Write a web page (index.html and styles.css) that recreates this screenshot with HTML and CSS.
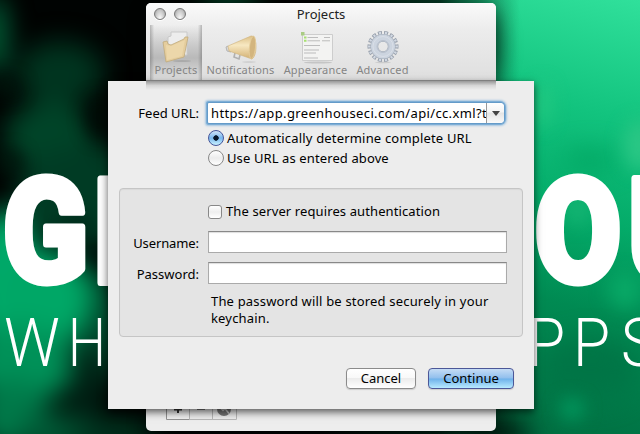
FILE: index.html
```html
<!DOCTYPE html>
<html lang="en">
<head>
<meta charset="utf-8">
<title>Projects</title>
<link rel="stylesheet" href="styles.css">
</head>
<body>
<div class="desktop">
  <svg class="wallpaper" viewBox="0 0 640 434" width="640" height="434">
    <defs>
      <linearGradient id="right" gradientUnits="userSpaceOnUse" x1="640" y1="0" x2="530" y2="434">
        <stop offset="0" stop-color="#30e09b"/><stop offset=".27" stop-color="#12c37e"/><stop offset=".5" stop-color="#04ab69"/><stop offset=".7" stop-color="#008a52"/><stop offset="1" stop-color="#006f42"/>
      </linearGradient>
      <linearGradient id="fade"><stop offset="0" stop-color="#000302"/><stop offset=".6" stop-color="#00170d" stop-opacity=".85"/><stop offset="1" stop-color="#003a22" stop-opacity="0"/></linearGradient>
      <filter id="soft" x="-200%" y="-200%" width="500%" height="500%" color-interpolation-filters="sRGB"><feGaussianBlur stdDeviation="13"/></filter>
      <filter id="fine" x="-200%" y="-200%" width="500%" height="500%" color-interpolation-filters="sRGB"><feGaussianBlur stdDeviation="9"/></filter>
    </defs>
    <rect width="640" height="434" fill="#000302"/>
    <rect x="320" width="320" height="434" fill="url(#right)"/>
    <rect x="320" width="200" height="434" fill="url(#fade)"/>
    <g filter="url(#soft)">
      <ellipse cx="60" cy="73" rx="44" ry="32" fill="#00341f"/>
      <ellipse cx="50" cy="137" rx="46" ry="36" fill="#004428"/>
      <ellipse cx="-5" cy="35" rx="12" ry="40" fill="#006b3f"/>
      <ellipse cx="90" cy="195" rx="75" ry="50" fill="#003b24"/>
      <ellipse cx="70" cy="330" rx="70" ry="65" fill="#00452a"/>
      <ellipse cx="5" cy="285" rx="36" ry="75" fill="#00a969"/>
      <ellipse cx="45" cy="298" rx="48" ry="48" fill="#00a766"/>
      <ellipse cx="20" cy="365" rx="50" ry="40" fill="#009158"/>
      <ellipse cx="12" cy="415" rx="36" ry="36" fill="#007949"/>
      <ellipse cx="60" cy="434" rx="44" ry="22" fill="#005a36"/>
      <ellipse cx="90" cy="382" rx="18" ry="34" fill="#001f13"/>
      <ellipse cx="110" cy="434" rx="50" ry="14" fill="#003a23"/>
      <ellipse cx="230" cy="-4" rx="30" ry="8" fill="#006b40"/>
      <ellipse cx="478" cy="45" rx="16" ry="36" fill="#002d1b"/>
      <ellipse cx="495" cy="434" rx="36" ry="18" fill="#001d11"/>
      <ellipse cx="590" cy="370" rx="48" ry="32" fill="#007546"/>
      <ellipse cx="590" cy="160" rx="28" ry="10" fill="#00a561"/>
    </g>
    <g filter="url(#fine)">
      <ellipse cx="6" cy="87" rx="14" ry="8" fill="#00160d"/>
      <ellipse cx="10" cy="162" rx="12" ry="10" fill="#00180e"/>
      <ellipse cx="100" cy="118" rx="13" ry="20" fill="#000b06"/>
      <ellipse cx="78" cy="222" rx="16" ry="7" fill="#002617"/>
      <ellipse cx="543" cy="105" rx="7" ry="22" fill="#25ca82"/>
      <ellipse cx="578" cy="210" rx="11" ry="14" fill="#18b574"/>
      <ellipse cx="625" cy="290" rx="17" ry="18" fill="#08a866"/>
      <ellipse cx="572" cy="409" rx="11" ry="10" fill="#00a063"/>
      <ellipse cx="640" cy="145" rx="16" ry="25" fill="#2bc785"/>
    </g>
    <text class="brand" transform="translate(3 282) scale(.86 1)">G</text>
    <text class="brand" transform="translate(94 282) scale(.8 1)">R</text>
    <text class="brand" transform="translate(535 282) scale(.86 1)">O</text>
    <text class="brand" transform="translate(628 282) scale(.86 1)">U</text>
    <text class="tagline" transform="translate(4 365.500) scale(.93 1)">W</text>
    <text class="tagline" transform="translate(68 365.500) scale(.8 1)">H</text>
    <text class="tagline" transform="translate(528 365.500) scale(.9 1)">P</text>
    <text class="tagline" transform="translate(573 365.500) scale(.9 1)">P</text>
    <text class="tagline" transform="translate(621 365.500) scale(.9 1)">S</text>
  </svg>

  <section class="window">
    <header class="chrome">
      <div class="titlebar">
        <div class="lights"><i class="light"></i><i class="light"></i></div>
        <h1 class="title">Projects</h1>
      </div>
      <nav class="toolbar">
        <a class="tool tool-projects">
          <svg class="icon" viewBox="0 0 36 36">
            <ellipse cx="24" cy="33" rx="9" ry="1" fill="#aaa"/>
            <path d="M10 9 13 8V4h16v23H10z" fill="#ededed" stroke="#c9c9c9"/>
            <path d="M5 14l4-1 1 3 3 1 13-6 1-2h3L26 29 8 34z" fill="#e5cd9d" stroke="#c0ab7c" stroke-width=".8"/>
            <path d="M8 17l5 1 14-6-3 16-15 4z" fill="#f0ddb2" opacity=".6"/>
          </svg>
          <span class="label">Projects</span>
        </a>
        <a class="tool tool-notifications">
          <svg class="icon" viewBox="0 0 36 36">
            <defs><linearGradient id="horn" x1="0" y1="0" x2="0" y2="1"><stop offset="0" stop-color="#dcbf85"/><stop offset=".4" stop-color="#f7e8c2"/><stop offset="1" stop-color="#d3b072"/></linearGradient></defs>
            <ellipse cx="26" cy="34" rx="7" ry=".8" fill="#ccc"/>
            <path d="M12 25l-1 4 5 2 1-4" fill="none" stroke="#b0b0b0" stroke-width="1.600"/>
            <path d="M5 18l-2 1 1 4 4 1" fill="#d8d8d8" stroke="#b5b5b5"/>
            <path d="M5 18 28 8c6-1 7 19 1 23L6 23z" fill="url(#horn)" stroke="#cfb17b" stroke-width=".6"/>
            <ellipse cx="29.500" cy="19.500" rx="3" ry="11.500" transform="rotate(6 29 19)" fill="#d3b57e" stroke="#e5cd9a" stroke-width=".8"/>
          </svg>
          <span class="label">Notifications</span>
        </a>
        <a class="tool tool-appearance">
          <svg class="icon" viewBox="0 0 36 36">
            <ellipse cx="20" cy="34.500" rx="14" ry="1" fill="#c5c5c5"/>
            <path d="M4.500 6.500h30v26h-30z" fill="#f3f3f2" stroke="#cdcdcd"/>
            <path d="M3 4h3.500v3.500H3z" fill="#a9cc83"/>
            <path d="M6 8.500h2.500v2H6zm0 3.300h2.500v2H6z" fill="#a7e070"/>
            <path d="M9.500 9.500H20m-10.500 3.300H22M26 9.500h6M24 12.800h8M6 17.500h16M6 22h15M6 25h12M6 30h14" stroke="#b5b5b5" stroke-width=".9"/>
          </svg>
          <span class="label">Appearance</span>
        </a>
        <a class="tool tool-advanced">
          <svg class="icon" viewBox="0 0 36 36">
            <ellipse cx="18" cy="34.500" rx="8" ry=".8" fill="#ccc"/>
            <g fill="none">
              <circle cx="18" cy="18.500" r="13" pathLength="28" stroke="#99a1ad" stroke-width="5" stroke-dasharray="1.300 .7" stroke-dashoffset=".65"/>
              <circle cx="18" cy="18.500" r="12.500" pathLength="28" stroke="#d2d9e3" stroke-width="4.800" stroke-dasharray=".7 1.300" stroke-dashoffset=".35"/>
              <circle cx="18" cy="18.500" r="8.700" stroke="#a4adb9" stroke-width="7.800"/>
              <circle cx="18" cy="18.500" r="8.700" stroke="#ccd4df" stroke-width="6.600"/>
              <circle cx="18" cy="18.500" r="6" stroke="#b2bac6" stroke-width=".8"/>
              <circle cx="18" cy="18.500" r="10" stroke="#dce1e9" stroke-width=".8"/>
            </g>
          </svg>
          <span class="label">Advanced</span>
        </a>
      </nav>
    </header>
    <footer class="listbar">
      <svg class="listbuttons" viewBox="0 0 71 22" width="71" height="22">
        <path d="M.5.500h23v21H.5z" fill="#f0f0f0" stroke="#929292"/>
        <path d="M23.500.500h47v21h-47zM46.500.500v21" fill="none" stroke="#b8b8b8"/>
        <path d="M8 11.500h8M12 7v8" stroke="#333" stroke-width="2"/>
        <path d="M31 11h8" stroke="#777" stroke-width="2"/>
        <circle cx="58" cy="11" r="7" fill="#777"/>
        <path d="M54 9.500l3 3 2-2 4 5" fill="none" stroke="#ccc" stroke-width="1.500"/>
      </svg>
    </footer>
  </section>

  <section class="sheet">
    <div class="row feed">
      <label class="field-label"><span>Feed URL:</span></label>
      <div class="combo"><span class="url">https://app.greenhouseci.com/api/cc.xml?t</span><span class="drop"><i class="arrow"></i></span></div>
    </div>
    <div class="choices">
      <label class="choice"><i class="radio on"></i><span class="t-wide">Automatically determine complete URL</span></label>
      <label class="choice"><i class="radio"></i><span class="t-mid">Use URL as entered above</span></label>
    </div>
    <div class="group">
      <label class="check"><i class="box"></i><span class="t-mid">The server requires authentication</span></label>
      <div class="row"><label class="field-label"><span class="t-tight">Username:</span></label><div class="input"></div></div>
      <div class="row"><label class="field-label"><span>Password:</span></label><div class="input"></div></div>
      <p class="note t-wide">The password will be stored securely in your<br>keychain.</p>
    </div>
    <div class="actions">
      <button class="button cancel">Cancel</button>
      <button class="button primary">Continue</button>
    </div>
  </section>
</div>
</body>
</html>
```
FILE: styles.css
```css
* { box-sizing: border-box; }
body { margin: 0; overflow: hidden; font: 13px/17px "Noto Sans", "Open Sans", sans-serif; color: #000; }
.desktop { position: relative; width: 640px; height: 434px; overflow: hidden; background: #000; }
.wallpaper { display: block; }
.brand { font: 900 145px Roboto, sans-serif; fill: #fff; stroke: #fff; stroke-width: 7px; stroke-linejoin: round; }
.tagline { font: 300 67px Roboto, sans-serif; fill: #fff; }

.window { position: absolute; left: 146px; top: 3px; width: 350px; height: 428px; border-radius: 5px; background: #ededed; box-shadow: 0 8px 18px rgba(0,0,0,.45); display: flex; flex-direction: column; justify-content: space-between; overflow: hidden; }
.chrome { height: 78px; background: linear-gradient(#fafafa, #ececec 35%, #dfdfdf); border-bottom: 1px solid #929292; }
.titlebar { height: 22px; display: grid; align-items: center; }
.lights, .title { grid-area: 1 / 1; }
.lights { display: flex; gap: 8px; padding-left: 8px; }
.light { width: 12px; height: 12px; border-radius: 50%; border: 1px solid #777; background: radial-gradient(ellipse at 50% 100%, #fff, #c8c8c8 60%, #999); box-shadow: 0 1px #fff; }
.title { margin: 0; text-align: center; font-size: 13px; font-weight: 400; color: #222; }
.toolbar { display: flex; height: 55px; padding-left: 4px; }
.tool { display: flex; flex-direction: column; align-items: center; padding-top: 3px; color: #858585; font-size: 11px; }
.tool-projects { width: 52px; background: linear-gradient(90deg, rgba(80,80,80,.35), transparent 8%, transparent 92%, rgba(80,80,80,.35)), linear-gradient(transparent, #c4c4c4 45%, #b9b9b9 60%, #e0e0e0); }
.tool-notifications { width: 77px; }
.tool-appearance { width: 73px; }
.tool-advanced { width: 61px; }
.icon { width: 36px; height: 36px; flex: none; }
.label { line-height: 14px; margin-top: -1px; white-space: nowrap; letter-spacing: .2px; }
.listbar { padding: 0 0 11px 20px; }
.listbuttons { display: block; }

.sheet { position: absolute; left: 108px; top: 81px; width: 426px; height: 328px; padding: 20px 11px; background: #ededed; box-shadow: 0 3px 8px rgba(0,0,0,.65); }
.sheet::before { content: ""; position: absolute; left: 38px; top: 0; width: 350px; height: 9px; background: linear-gradient(rgba(0,0,0,.36), rgba(0,0,0,.1) 50%, transparent); }
.row { display: flex; align-items: center; height: 31px; }
.field-label { width: 80px; margin-right: 9px; display: flex; justify-content: flex-end; white-space: nowrap; }
.feed { height: 24px; }
.combo { width: 296px; height: 20px; display: flex; border-radius: 1px 4px 4px 1px; background: #fff; box-shadow: 0 0 0 1px #649bc9, 0 0 0 2px #7eaed6, 0 0 2px 3px #a6c7e2; }
.url { width: 278px; padding-left: 3px; line-height: 20px; white-space: nowrap; overflow: hidden; letter-spacing: .36px; }
.drop { width: 18px; border-left: 1px solid #999; border-radius: 0 4px 4px 0; display: flex; align-items: center; justify-content: center; background: linear-gradient(#fff, #f4f4f4 45%, #e4e4e4 50%, #fafafa); }
.arrow { border: 4px solid transparent; border-top: 5px solid #444; border-bottom: 0; }
.choices { padding: 3px 0 0 89px; }
.choice { display: flex; align-items: center; height: 20px; gap: 3px; white-space: nowrap; }
.t-wide { letter-spacing: .18px; }
.t-mid { letter-spacing: .11px; }
.t-tight { letter-spacing: -.1px; }
.radio { width: 16px; height: 16px; border-radius: 50%; border: 1px solid #888; background: linear-gradient(#fff, #ececec 50%, #fff); flex: none; }
.radio.on { border-color: #45569a; background: radial-gradient(circle, #07172a 2.4px, transparent 3px), linear-gradient(#d0e4f9, #79b7ee 50%, #c9f2ff); }
.group { margin-top: 20px; height: 149px; border: 1px solid #c5c5c5; border-radius: 4px; background: #e4e4e4; padding-top: 15px; box-shadow: inset 0 1px 1px #d9d9d9; }
.group .field-label { width: 79px; padding-top: 3px; }
.check { display: flex; align-items: center; height: 15px; gap: 4px; padding-left: 88px; margin-bottom: 7px; white-space: nowrap; }
.box { width: 14px; height: 14px; border: 1px solid #888; border-radius: 3px; background: linear-gradient(#fff, #eee 50%, #fff); flex: none; }
.input { width: 299px; height: 22px; background: #fff; border: 1px solid #aaa; border-top-color: #888; box-shadow: inset 0 1px 1px #ddd; }
.note { margin: 5px 0 0 91px; white-space: nowrap; }
.actions { display: flex; justify-content: flex-end; gap: 12px; padding: 31px 9px 0 0; }
.button { height: 21px; padding: 0; border: 1px solid #8b8b8b; border-radius: 4px; font: inherit; color: #000; line-height: 17px; background: linear-gradient(#fff, #f8f8f8 48%, #ececec 50%, #fff); box-shadow: 0 1px 1px #ccc; }
.cancel { width: 70px; }
.primary { width: 86px; border-color: #4c5798; background: linear-gradient(#c5dcf5, #91bfed 48%, #6eb1ea 52%, #b8eaff); }
```
